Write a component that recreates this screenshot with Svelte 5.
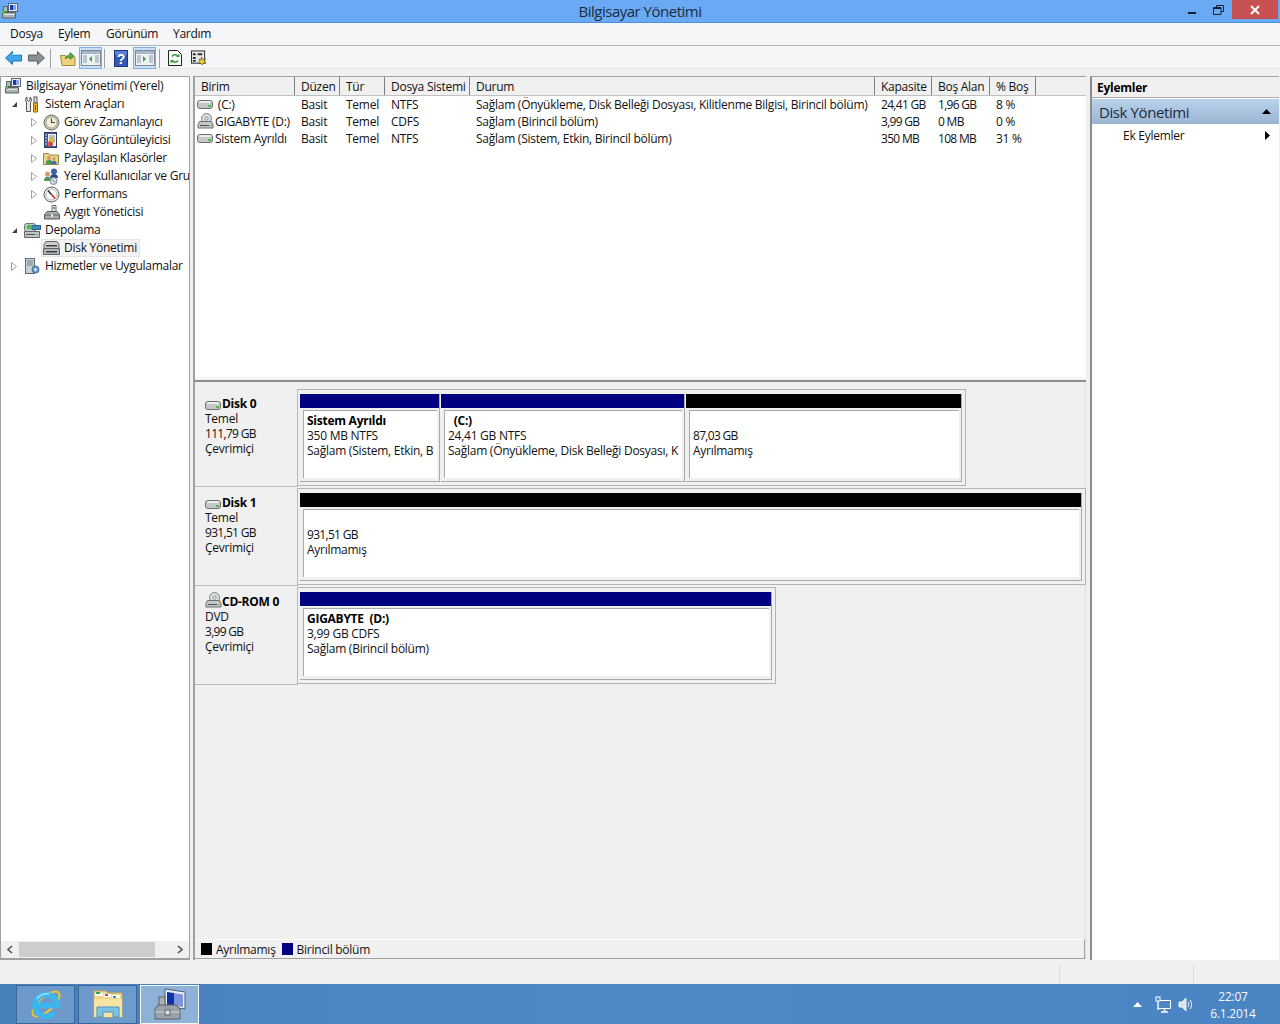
<script>
    // Tree on the left: depth, arrow state, icon, label
    const tree = [
        { depth: 0, arrow: "", icon: "comp", label: "Bilgisayar Yönetimi (Yerel)" },
        { depth: 1, arrow: "open", icon: "tools", label: "Sistem Araçları" },
        { depth: 2, arrow: "closed", icon: "clock", label: "Görev Zamanlayıcı" },
        { depth: 2, arrow: "closed", icon: "log", label: "Olay Görüntüleyicisi" },
        { depth: 2, arrow: "closed", icon: "share", label: "Paylaşılan Klasörler" },
        { depth: 2, arrow: "closed", icon: "users", label: "Yerel Kullanıcılar ve Gru" },
        { depth: 2, arrow: "closed", icon: "perf", label: "Performans" },
        { depth: 2, arrow: "", icon: "device", label: "Aygıt Yöneticisi" },
        { depth: 1, arrow: "open", icon: "storage", label: "Depolama" },
        { depth: 2, arrow: "", icon: "diskmgmt", label: "Disk Yönetimi", selected: true },
        { depth: 1, arrow: "closed", icon: "services", label: "Hizmetler ve Uygulamalar" }
    ];

    const columns = [
        { name: "Birim", width: 100 },
        { name: "Düzen", width: 45 },
        { name: "Tür", width: 45 },
        { name: "Dosya Sistemi", width: 85 },
        { name: "Durum", width: 405 },
        { name: "Kapasite", width: 57 },
        { name: "Boş Alan", width: 58 },
        { name: "% Boş", width: 46 }
    ];

    const volumes = [
        { icon: "hdd", cells: ["\u00a0(C:)", "Basit", "Temel", "NTFS", "Sağlam (Önyükleme, Disk Belleği Dosyası, Kilitlenme Bilgisi, Birincil bölüm)", "24,41 GB", "1,96 GB", "8 %"] },
        { icon: "cd", cells: ["GIGABYTE (D:)", "Basit", "Temel", "CDFS", "Sağlam (Birincil bölüm)", "3,99 GB", "0 MB", "0 %"] },
        { icon: "hdd", cells: ["Sistem Ayrıldı", "Basit", "Temel", "NTFS", "Sağlam (Sistem, Etkin, Birincil bölüm)", "350 MB", "108 MB", "31 %"] }
    ];

    const disks = [
        {
            icon: "hdd", name: "Disk 0", lines: ["Temel", "111,79 GB", "Çevrimiçi"], width: 668,
            parts: [
                { width: 140, color: "navy", title: "Sistem Ayrıldı", size: "350 MB NTFS", state: "Sağlam (Sistem, Etkin, B" },
                { width: 244, color: "navy", title: "\u00a0 (C:)", size: "24,41 GB NTFS", state: "Sağlam (Önyükleme, Disk Belleği Dosyası, K" },
                { width: 276, color: "black", title: "\u00a0", size: "87,03 GB", state: "Ayrılmamış" }
            ]
        },
        {
            icon: "hdd", name: "Disk 1", lines: ["Temel", "931,51 GB", "Çevrimiçi"], width: 788,
            parts: [{ width: 782, color: "black", title: "\u00a0", size: "931,51 GB", state: "Ayrılmamış" }]
        },
        {
            icon: "cd", name: "CD-ROM 0", lines: ["DVD", "3,99 GB", "Çevrimiçi"], width: 478,
            parts: [{ width: 472, color: "navy", title: "GIGABYTE\u00a0 (D:)", size: "3,99 GB CDFS", state: "Sağlam (Birincil bölüm)" }]
        }
    ];

    function isSize(text) {
        return /^[\d,]+ (GB|MB)$/.test(text);
    }
</script>

{#snippet hdd()}
    <svg width="17" height="11" viewBox="0 0 17 11">
        <rect x="0.5" y="1.5" width="15" height="8" rx="2.5" fill="#c4c8c8" stroke="#6b6f70" />
        <rect x="2" y="2" width="12" height="2" rx="1" fill="#eceeee" />
        <rect x="11" y="6" width="3" height="2" fill="#58b84a" />
    </svg>
{/snippet}

{#snippet cd()}
    <svg width="17" height="17" viewBox="0 0 17 17">
        <circle cx="9.5" cy="5.5" r="5" fill="#d6dde0" stroke="#7d8689" />
        <circle cx="9.5" cy="5.5" r="1.5" fill="#fff" stroke="#7d8689" />
        <path d="M2.500 8.500h12l1.500 3v3.500h-15v-3.500z" fill="#c4c8c8" stroke="#6b6f70" />
        <rect x="3" y="12" width="9" height="1" fill="#4d5153" />
        <rect x="13" y="12" width="2" height="1" fill="#58b84a" />
    </svg>
{/snippet}

{#snippet comp(size = 16)}
    <svg width={size} height={size} viewBox="0 0 16 16">
        <rect x="6.5" y="0.5" width="9" height="8" fill="#e8eef8" stroke="#59667a" />
        <path d="M8 2h6v5H8z" fill="#1438b4" />
        <path d="M11 2h3v5h-3z" fill="#8aa4e4" />
        <rect x="1.5" y="3.5" width="4" height="5" fill="#b4bcc0" stroke="#59636a" />
        <path d="M0.500 9.500h13v5.500h-13z" fill="#a9b1b6" stroke="#59636a" />
        <rect x="2" y="11" width="10" height="1" fill="#e4e8ea" />
        <rect x="0" y="8" width="3" height="3" fill="#58b84a" />
    </svg>
{/snippet}

{#snippet icon(name)}
    {#if name === "comp"}
        {@render comp()}
    {:else if name === "tools"}
        <svg width="16" height="17" viewBox="0 0 16 17">
            <path d="M3 1v3l1.500 1L6 4V1c2 1 2 4 .5 5v9.500h-4V6C1 5 1 2 3 1z" fill="#e6e8ea" stroke="#55595c" />
            <rect x="10" y="1" width="3" height="6" fill="#d8dadc" stroke="#55595c" />
            <path d="M9.500 7h4v9h-4z" fill="#f2b61c" stroke="#8a6408" />
            <rect x="11" y="9" width="1" height="5" fill="#7a5a08" />
        </svg>
    {:else if name === "clock"}
        <svg width="17" height="17" viewBox="0 0 17 17">
            <circle cx="8.5" cy="8.5" r="7.5" fill="#ccc6b2" stroke="#6c6c68" />
            <circle cx="8.5" cy="8.5" r="5.5" fill="#f4f0dc" stroke="#a8a494" />
            <path d="M8.500 4.500v4h3.500" fill="none" stroke="#4c4a3e" stroke-width="1.2" />
        </svg>
    {:else if name === "log"}
        <svg width="16" height="16" viewBox="0 0 16 16">
            <rect x="1.5" y="0.5" width="12" height="15" fill="#3f5a94" stroke="#2b3e68" />
            <rect x="5" y="2" width="8" height="12" fill="#f2f2ee" />
            <path d="M6 4h6M6 6h6M6 8h6" stroke="#8d94a4" />
            <path d="M8.500 5l3 5h-6z" fill="#f5d23a" stroke="#a88a10" stroke-width="0.6" />
            <circle cx="7.5" cy="12" r="2.5" fill="#d8473c" />
            <path d="M2 3h2M2 6h2M2 9h2M2 12h2" stroke="#d7deea" />
        </svg>
    {:else if name === "share"}
        <svg width="16" height="16" viewBox="0 0 16 16">
            <path d="M0.500 3.500h5l1 1.500h9v9.500h-15z" fill="#ecd48e" stroke="#9c8644" />
            <circle cx="6" cy="8" r="2" fill="#cc9a6e" />
            <path d="M3 14v-2.500c0-1 1-1.500 3-1.500s3 .5 3 1.500v2.500z" fill="#4a9a58" />
            <circle cx="11" cy="9" r="1.7" fill="#cc9a6e" />
            <path d="M8.500 14v-1.500c0-1 1-1.500 2.500-1.500s2.500 .5 2.500 1.500v1.500z" fill="#3e6cb0" />
        </svg>
    {:else if name === "users"}
        <svg width="17" height="17" viewBox="0 0 17 17">
            <circle cx="11" cy="3.5" r="3" fill="#3c5fa8" />
            <path d="M7 10c0-3 2-4 4-4s4 1 4 4z" fill="#2a4a90" />
            <circle cx="4.5" cy="6" r="2.5" fill="#d0a070" />
            <path d="M1 13c0-3 1.500-4.500 3.500-4.500S8 10 8 13z" fill="#4a9a50" />
            <circle cx="10.5" cy="13" r="3.5" fill="#d8dee4" stroke="#7b8893" />
            <path d="M8.500 11.500l4 3" stroke="#7b8893" />
        </svg>
    {:else if name === "perf"}
        <svg width="17" height="17" viewBox="0 0 17 17">
            <circle cx="8.5" cy="8.5" r="7.5" fill="#eef0f0" stroke="#5a5e60" />
            <circle cx="8.5" cy="8.5" r="5.5" fill="#fff" stroke="#b4b8ba" />
            <path d="M5 4.500l3.500 4" stroke="#26304c" stroke-width="1.6" />
            <path d="M8.500 8.500l3.500 4" stroke="#d2281e" stroke-width="1.6" />
        </svg>
    {:else if name === "device"}
        <svg width="17" height="16" viewBox="0 0 17 16">
            <path d="M9 1.500h4v6h-4z" fill="#e6e8e8" stroke="#6a6e70" />
            <rect x="10" y="3" width="2" height="2" fill="#58b84a" />
            <path d="M4 7.500h10l2.500 3v4.500h-15v-4.500z" fill="#a8adb0" stroke="#55595c" />
            <path d="M2 11h14" stroke="#5e6366" />
            <rect x="8" y="10" width="2" height="3" fill="#e0e2e2" />
        </svg>
    {:else if name === "storage"}
        <svg width="17" height="17" viewBox="0 0 17 17">
            <rect x="0.5" y="1.5" width="11" height="8" rx="2" fill="#c2d0d4" stroke="#6b7578" />
            <circle cx="5" cy="5" r="2.5" fill="#58b84a" />
            <rect x="8" y="3.5" width="8.5" height="4" fill="#3a8ec0" stroke="#2a6486" />
            <path d="M0.500 9.500h15v6h-15z" fill="#bfc4c6" stroke="#5f6568" />
            <rect x="2" y="12" width="9" height="1" fill="#4d5153" />
            <rect x="12" y="12" width="2" height="1" fill="#58b84a" />
        </svg>
    {:else if name === "diskmgmt"}
        <svg width="17" height="16" viewBox="0 0 17 16">
            <path d="M3 1.500h11l2 3v4h-15v-4z" fill="#c9cdce" stroke="#5c6062" />
            <rect x="3" y="5" width="11" height="1.5" fill="#3e4244" />
            <path d="M0.500 8.500h16v6h-16z" fill="#b1b6b8" stroke="#5c6062" />
            <rect x="3" y="11" width="11" height="1.5" fill="#3e4244" />
        </svg>
    {:else if name === "services"}
        <svg width="17" height="17" viewBox="0 0 17 17">
            <rect x="1.5" y="0.5" width="9" height="15" fill="#c8d0d8" stroke="#5e6a74" />
            <path d="M3 3h6M3 5h6M3 7h6" stroke="#6f7c88" />
            <circle cx="11.5" cy="11.5" r="3.5" fill="#6c9ed0" stroke="#3e6a96" />
            <circle cx="11.5" cy="11.5" r="1.2" fill="#eef4fa" />
        </svg>
    {/if}
{/snippet}

{#snippet volumeIcon(name)}
    {#if name === "hdd"}{@render hdd()}{:else}{@render cd()}{/if}
{/snippet}

<div class="screen">
    <header class="titlebar">
        <span class="titleIcon">{@render comp(16)}</span>
        <span class="title">Bilgisayar Yönetimi</span>
        <div class="winButtons">
            <span class="winBtn">
                <svg width="10" height="10" viewBox="0 0 10 10"><rect x="1" y="7" width="8" height="2" fill="#14202c" /></svg>
            </span>
            <span class="winBtn">
                <svg width="11" height="10" viewBox="0 0 11 10"><path d="M3.500 2.500v-2h7v6h-2M0.500 2.500h7.500v7h-7.500z" fill="none" stroke="#14202c" /><rect x="1" y="3" width="7" height="1" fill="#14202c" /></svg>
            </span>
            <span class="winBtn close">
                <svg width="10" height="10" viewBox="0 0 10 10"><path d="M1 1l8 8M9 1l-8 8" stroke="#fff" stroke-width="2" /></svg>
            </span>
        </div>
    </header>

    <nav class="menubar">
        <span class="menuWide">Dosya</span>
        <span class="menuWide">Eylem</span>
        <span class="menuView">Görünüm</span>
        <span>Yardım</span>
    </nav>

    <div class="toolbar">
        <svg width="17" height="14" viewBox="0 0 17 14"><path d="M7.500 0.500L0.500 7l7 6.500V10h9V4h-9z" fill="#3fa6ea" stroke="#1f6fb4" /><path d="M7 3.500H16" stroke="#9fdcfa" /></svg>
        <svg class="gapS" width="17" height="14" viewBox="0 0 17 14"><path d="M9.500 0.500l7 6.500-7 6.500V10h-9V4h9z" fill="#8b8f92" stroke="#5f6366" /></svg>
        <span class="sep sepA"></span>
        <svg class="gapM" width="16" height="17" viewBox="0 0 16 17"><path d="M0.500 5.500h5l1 1.500h8.500v8.500H2z" fill="#f0d078" stroke="#a88a3a" /><path d="M5 9c1-3 3-4 5-4V2.500l4 3.500-4 3.500V7c-2 0-4 1-5 2z" fill="#58b04a" stroke="#2e7a28" stroke-width="0.7" /></svg>
        <span class="toggle gapF">
            <svg width="20" height="16" viewBox="0 0 20 16"><rect x="0.5" y="0.5" width="19" height="15" fill="#eef2f6" stroke="#7b8794" /><rect x="1" y="1" width="18" height="3" fill="#a8b8c8" /><path d="M2 6h4M2 8h4M2 10h4M2 12h4M14 6h4M14 8h4M14 10h4M14 12h4" stroke="#8c98a4" /><path d="M11 6v6l-3-3z" fill="#3aa53a" /></svg>
        </span>
        <span class="sep sepB"></span>
        <svg class="gapH" width="14" height="17" viewBox="0 0 14 17"><rect x="0.5" y="0.5" width="13" height="16" fill="#3458b8" stroke="#1e3480" /><path d="M1 1h12v4H1z" fill="#5d80d4" /><text x="7" y="13.500" text-anchor="middle" font-family="Liberation Sans" font-size="14" font-weight="700" fill="#fff">?</text></svg>
        <span class="toggle gapT">
            <svg width="20" height="16" viewBox="0 0 20 16"><rect x="0.5" y="0.5" width="19" height="15" fill="#eef2f6" stroke="#7b8794" /><rect x="1" y="1" width="18" height="3" fill="#a8b8c8" /><path d="M2 6h4M2 8h4M2 10h4M2 12h4M14 6h4M14 8h4M14 10h4M14 12h4" stroke="#8c98a4" /><path d="M8 6v6l3-3z" fill="#3aa53a" /></svg>
        </span>
        <span class="sep sepC"></span>
        <svg class="gapR" width="14" height="16" viewBox="0 0 14 16"><path d="M0.500 0.500h9l4 4v11h-13z" fill="#fff" stroke="#222" /><path d="M4 6.500a3.500 3.500 0 0 1 6 0M10 10.500a3.500 3.500 0 0 1-6 0" fill="none" stroke="#2c9a30" stroke-width="1.5" /><path d="M8 7h3.500V3.500zM6 10H2.500v3.500z" fill="#2c9a30" /></svg>
        <svg class="gapE" width="16" height="16" viewBox="0 0 17 16"><rect x="0.5" y="0.5" width="14" height="13" fill="#e8e8e4" stroke="#222" /><path d="M2 3h3v2H2zM7 3h5v2H7zM2 7h3v2H2zM2 10h3v2H2z" fill="#333" /><path d="M11 7l1.500 2.500 3-.5-1.500 2.500 2 2-3 .2-1 1.800-1.500-2-2.500.2 1.500-2.500-1-2 2.500.3z" fill="#f0d020" stroke="#333" stroke-width="0.6" /></svg>
    </div>

    <main class="workarea">
        <aside class="tree">
            <div class="treeList">
                {#each tree as node}
                    <div class="treeRow depth{node.depth}">
                        <span class="arrow">
                            {#if node.arrow === "open"}
                                <svg width="7" height="7" viewBox="0 0 7 7"><path d="M6 1v5H1z" fill="#404040" /></svg>
                            {:else if node.arrow === "closed"}
                                <svg width="6" height="9" viewBox="0 0 6 9"><path d="M0.500 0.500l5 4-5 4z" fill="#fff" stroke="#a0a0a0" /></svg>
                            {/if}
                        </span>
                        <span class="treeItem" class:selected={node.selected}>
                            <span class="treeIcon">{@render icon(node.icon)}</span>
                            <span class="treeLabel">{node.label}</span>
                        </span>
                    </div>
                {/each}
            </div>
            <div class="hscroll">
                <svg width="8" height="9" viewBox="0 0 8 9"><path d="M6 1L2 4.500 6 8" fill="none" stroke="#505050" stroke-width="1.600" /></svg>
                <span class="thumb"></span>
                <svg width="8" height="9" viewBox="0 0 8 9"><path d="M2 1l4 3.500L2 8" fill="none" stroke="#505050" stroke-width="1.600" /></svg>
            </div>
        </aside>

        <section class="center">
            <div class="listPane">
                <div class="listHead">
                    {#each columns as col}
                        <span class="headCell" style="width:{col.width}px">{col.name}</span>
                    {/each}
                </div>
                {#each volumes as vol}
                    <div class="listRow">
                        {#each vol.cells as cell, i}
                            <span class="cell" class:first={i === 0} class:size={isSize(cell)} style="width:{columns[i].width}px">
                                {#if i === 0}<span class="volIcon">{@render volumeIcon(vol.icon)}</span>{/if}{cell}
                            </span>
                        {/each}
                    </div>
                {/each}
            </div>
            <div class="splitter"></div>
            <div class="diskPane">
                <div class="diskList">
                    {#each disks as disk}
                        <div class="diskRow">
                            <div class="diskInfo">
                                <div class="diskName"><span class="diskIcon">{@render volumeIcon(disk.icon)}</span>{disk.name}</div>
                                {#each disk.lines as line}
                                    <div class:size={isSize(line)}>{line}</div>
                                {/each}
                            </div>
                            <div class="partitions" style="width:{disk.width}px">
                                {#each disk.parts as part}
                                    <div class="partition" style="width:{part.width}px">
                                        <div class="bar {part.color}"></div>
                                        <div class="partBody">
                                            <div class="partText">
                                                <b>{part.title}</b>
                                                <div class:size={isSize(part.size)}>{part.size}</div>
                                                <div>{part.state}</div>
                                            </div>
                                        </div>
                                    </div>
                                {/each}
                            </div>
                        </div>
                    {/each}
                </div>
                <div class="legend">
                    <span class="swatch black"></span><span class="legendText">Ayrılmamış</span>
                    <span class="swatch navy"></span><span>Birincil bölüm</span>
                </div>
            </div>
        </section>

        <aside class="actions">
            <div class="actionsHead">Eylemler</div>
            <div class="actionsGroup">
                <span>Disk Yönetimi</span>
                <svg width="9" height="5" viewBox="0 0 9 5"><path d="M4.500 0L9 5H0z" fill="#000" /></svg>
            </div>
            <div class="actionsItem">
                <span>Ek Eylemler</span>
                <svg width="5" height="9" viewBox="0 0 5 9"><path d="M0 0l5 4.500L0 9z" fill="#000" /></svg>
            </div>
        </aside>
    </main>

    <div class="statusbar">
        <span class="statusMain"></span>
        <span class="statusMid"></span>
        <span class="statusEnd"></span>
    </div>

    <footer class="taskbar">
        <div class="taskBtn">
            <svg width="32" height="34" viewBox="0 0 32 34">
                <ellipse cx="16" cy="17" rx="17" ry="7" transform="rotate(-42 16 17)" fill="none" stroke="#f2c230" stroke-width="2" />
                <path d="M6 18.500H27A11 11 0 1 0 24 26" fill="none" stroke="#3cb6ee" stroke-width="5.500" />
                <path d="M7 12c2-4 7-6 12-5" fill="none" stroke="#a8e4fa" stroke-width="1.500" />
            </svg>
        </div>
        <div class="taskBtn">
            <svg width="32" height="30" viewBox="0 0 32 30">
                <path d="M2 2h12l2 2h14v24H2z" fill="#f0d888" stroke="#c8a858" />
                <path d="M3 4h8v3H3z" fill="#fff" /><rect x="4" y="3" width="4" height="2" fill="#2aa84a" />
                <path d="M12 5h7v3h-7z" fill="#fff" /><rect x="13" y="5" width="3" height="2" fill="#d84030" />
                <path d="M20 6h8v3h-8z" fill="#fff" /><rect x="21" y="7" width="3" height="2" fill="#2a90e0" />
                <path d="M2 10h28v18H2z" fill="#f6e4a4" />
                <path d="M5 18h22v10h-6v-5H11v5H5z" fill="#7cc4e4" stroke="#4a94bc" />
            </svg>
        </div>
        <div class="taskBtn active">
            <svg width="32" height="32" viewBox="0 0 32 32">
                <path d="M11 1l20 3v17l-20-3z" fill="#e8eef8" stroke="#52606e" />
                <path d="M13 4l7 1v13l-7-1z" fill="#1030a8" />
                <path d="M20 5l9 1.500v12.500l-9-1z" fill="#7c94dc" />
                <rect x="5" y="9" width="6" height="9" fill="#aab2b6" stroke="#5a6266" />
                <path d="M4 17h18l4 4v10H1V21z" fill="#98a2a8" stroke="#5a6266" />
                <path d="M1 24h25" stroke="#d0d6d8" />
                <rect x="11" y="22" width="5" height="5" fill="#dce2e4" stroke="#5a6266" />
            </svg>
        </div>
        <div class="tray">
            <svg width="9" height="5" viewBox="0 0 9 5"><path d="M4.500 0L9 5H0z" fill="#fff" /></svg>
            <svg class="net" width="16" height="17" viewBox="0 0 16 17"><path d="M3.500 4.500H15.500v8H3.500" fill="none" stroke="#fff" /><path d="M9.500 12.500v2.500M6 16h7" stroke="#fff" stroke-width="1.400" /><rect x="1" y="1" width="4" height="4" fill="#4a86c4" stroke="#fff" /><path d="M3 5v9" stroke="#fff" stroke-width="1.400" /></svg>
            <svg class="vol" width="16" height="15" viewBox="0 0 16 15"><path d="M1 5h3l4-4v13l-4-4H1z" fill="#d8e4f2" stroke="#fff" stroke-width="0.800" /><path d="M10 5c1 1.500 1 3.500 0 5M12 3c2 2.500 2 6.500 0 9" fill="none" stroke="#fff" /></svg>
            <div class="clock"><div>22:07</div><div>6.1.2014</div></div>
        </div>
    </footer>
</div>

<style>
    :global(body) {
        margin: 0;
        background: #f0f0f0;
    }

    .screen {
        width: 1280px;
        height: 1024px;
        display: flex;
        flex-direction: column;
        overflow: hidden;
        font-family: "Open Sans", "Liberation Sans", sans-serif;
        font-size: 12px;
        letter-spacing: -0.26px;
        color: #111;
    }

    .size {
        letter-spacing: -0.7px;
    }

    .titlebar {
        height: 22px;
        flex: none;
        display: flex;
        align-items: center;
        position: relative;
        background: #6aaaf4;
        border-bottom: 1px solid #4d8fd8;
    }

    .titleIcon {
        display: flex;
        margin-left: 2px;
    }

    .title {
        position: absolute;
        left: 0;
        right: 0;
        text-align: center;
        font-size: 15px;
        letter-spacing: -0.5px;
        color: #1b2b3c;
    }

    .winButtons {
        margin-left: auto;
        display: flex;
        align-self: flex-start;
        margin-right: 2px;
    }

    .winBtn {
        width: 27px;
        height: 19px;
        display: flex;
        align-items: center;
        justify-content: center;
    }

    .close {
        width: 46px;
        background: #c75050;
    }

    .menubar {
        height: 22px;
        flex: none;
        display: flex;
        align-items: center;
        padding-left: 10px;
        padding-bottom: 1px;
        box-sizing: content-box;
        height: 21px;
        background: #f5f6f7;
        border-bottom: 1px solid #b5b5b5;
    }

    .menuWide { width: 48px; }
    .menuView { width: 67px; }

    .toolbar {
        height: 20px;
        padding-top: 2px;
        flex: none;
        display: flex;
        align-items: center;
        padding-left: 5px;
        background: #f5f6f7;
        border-bottom: 1px solid #e8e8e8;
    }

    .gapS { margin-left: 6px; }
    .gapM { margin-left: 9px; }
    .gapF { margin-left: 3px; }
    .gapH { margin-left: 9px; }
    .gapT { margin-left: 5px; }
    .gapR { margin-left: 8px; }
    .gapE { margin-left: 9px; }

    .sep {
        width: 1px;
        height: 19px;
        background: #a0a0a0;
    }

    .sepA { margin-left: 5px; }
    .sepB { margin-left: 2px; }
    .sepC { margin-left: 3px; }

    .toggle {
        width: 21px;
        height: 20px;
        flex: none;
        display: flex;
        align-items: center;
        justify-content: center;
        background: #c9e0f7;
        border: 1px solid #7eb0e4;
    }

    .workarea {
        flex: 1;
        min-height: 0;
        display: flex;
        padding: 7px 0 2px 0;
        gap: 3px;
    }

    .tree {
        width: 188px;
        display: flex;
        flex-direction: column;
        background: #fff;
        border: 1px solid #a0a0a0;
        border-bottom-width: 2px;
    }

    .treeList {
        flex: 1;
        overflow: hidden;
    }

    .treeRow {
        height: 18px;
        display: flex;
        align-items: center;
        white-space: nowrap;
    }

    .depth0 { padding-left: 4px; }
    .depth1 { padding-left: 10px; }
    .depth2 { padding-left: 30px; }

    .arrow {
        width: 13px;
        display: flex;
        flex: none;
    }

    .depth2 .arrow { width: 12px; }
    .depth0 .arrow { width: 0; }

    .treeItem {
        display: flex;
        align-items: center;
        height: 18px;
    }

    .treeIcon {
        width: 17px;
        height: 17px;
        flex: none;
        display: flex;
        align-items: center;
        margin-right: 3px;
    }

    .treeLabel {
        padding: 0 3px 1px 1px;
        line-height: 15px;
    }

    .selected {
        margin-left: -2px;
        padding-left: 2px;
        background: #f3f3f3;
        box-shadow: inset 0 0 0 1px #e4e4e4;
    }

    .hscroll {
        height: 17px;
        flex: none;
        display: flex;
        align-items: center;
        padding: 0 5px;
        background: #f0f0f0;
    }

    .thumb {
        width: 136px;
        height: 15px;
        margin: 0 auto 0 5px;
        background: #cdcdcd;
    }

    .center {
        width: 891px;
        display: flex;
        flex-direction: column;
        border-left: 2px solid #a0a0a0;
        border-top: 1px solid #a0a0a0;
    }

    .listPane {
        height: 300px;
        flex: none;
        background: #fff;
        overflow: hidden;
    }

    .listHead {
        height: 18px;
        display: flex;
        background: #f0f0f0;
        border-bottom: 1px solid #c0c0c0;
    }

    .headCell {
        flex: none;
        box-sizing: border-box;
        padding: 1px 0 0 6px;
        border-right: 1px solid #808080;
        white-space: nowrap;
    }

    .listRow {
        height: 17px;
        display: flex;
        align-items: center;
    }

    .cell {
        flex: none;
        box-sizing: border-box;
        padding-left: 6px;
        white-space: pre;
        overflow: hidden;
    }

    .first {
        padding-left: 2px;
        display: flex;
        align-items: center;
    }

    .volIcon {
        display: flex;
        width: 18px;
        flex: none;
    }

    .splitter {
        height: 5px;
        flex: none;
        background: #f4f4f4;
        border-bottom: 2px solid #8c8c8c;
        box-sizing: border-box;
    }

    .diskPane {
        flex: 1;
        min-height: 0;
        display: flex;
        flex-direction: column;
        background: #f0f0f0;
        border-right: 1px solid #e0e0e0;
    }

    .diskList {
        flex: 1;
        padding-top: 7px;
    }

    .diskRow {
        height: 99px;
        display: flex;
        align-items: flex-start;
    }

    .diskInfo {
        width: 103px;
        height: 98px;
        flex: none;
        box-sizing: border-box;
        padding: 7px 0 0 10px;
        line-height: 15px;
        border-right: 1px solid #b8b8b8;
        border-bottom: 1px solid #b8b8b8;
    }

    .diskName {
        display: flex;
        align-items: center;
        font-weight: 700;
        color: #000;
    }

    .diskIcon {
        width: 17px;
        height: 15px;
        display: flex;
        align-items: flex-end;
    }

    .partitions {
        height: 97px;
        box-sizing: border-box;
        display: flex;
        gap: 1px;
        padding: 4px 3px 3px 2px;
        border: 1px solid #b4b4b4;
        border-left: 0;
    }

    .partition {
        flex: none;
        display: flex;
        flex-direction: column;
        box-sizing: border-box;
        border-right: 1px solid #a9a9a9;
        border-bottom: 1px solid #a9a9a9;
    }

    .bar {
        height: 14px;
        flex: none;
    }

    .navy { background: #000080; }
    .black { background: #000; }

    .partBody {
        flex: 1;
        margin: 2px 2px 3px 3px;
        background: #fff;
        border-top: 1px solid #a9a9a9;
        border-left: 1px solid #a9a9a9;
        overflow: hidden;
    }

    .partText {
        padding: 2px 0 0 3px;
        line-height: 15px;
        white-space: nowrap;
    }

    .partText b {
        color: #000;
    }

    .legend {
        height: 20px;
        flex: none;
        display: flex;
        align-items: center;
        padding-left: 6px;
        margin-bottom: 1px;
        border-top: 1px solid #fff;
        border-bottom: 1px solid #a0a0a0;
        border-right: 1px solid #a0a0a0;
        box-sizing: border-box;
    }

    .swatch {
        width: 11px;
        height: 12px;
        margin-right: 4px;
    }

    .legendText {
        margin-right: 6px;
    }

    .actions {
        width: 187px;
        margin-left: 1px;
        background: #fff;
        border-left: 2px solid #8c8c8c;
        border-top: 1px solid #a0a0a0;
    }

    .actionsHead {
        height: 21px;
        box-sizing: border-box;
        padding: 2px 0 0 5px;
        font-weight: 700;
        background: #f0f0f0;
        border-bottom: 1px solid #a9a9a9;
        color: #000;
    }

    .actionsGroup {
        height: 25px;
        margin-top: 1px;
        display: flex;
        align-items: center;
        justify-content: space-between;
        padding: 0 8px 0 7px;
        font-size: 15px;
        letter-spacing: -0.4px;
        color: #1a2a40;
        background: linear-gradient(#bad2ea, #9ab5d4);
    }

    .actionsItem {
        height: 23px;
        display: flex;
        align-items: center;
        justify-content: space-between;
        padding: 0 9px 0 31px;
    }

    .statusbar {
        height: 22px;
        flex: none;
        display: flex;
        background: #f0f0f0;
    }

    .statusMain { width: 1059px; }

    .statusMid {
        width: 133px;
        margin: 2px 0 0;
        border-left: 1px solid #dcdcdc;
    }

    .statusEnd {
        flex: 1;
        margin: 2px 0 0;
        border-left: 1px solid #dcdcdc;
    }

    .taskbar {
        height: 40px;
        flex: none;
        display: flex;
        align-items: center;
        gap: 3px;
        padding-left: 16px;
        background: linear-gradient(90deg, #4880bc, #4f8ac8 50%, #4a84c2);
    }

    .taskBtn {
        width: 57px;
        height: 37px;
        display: flex;
        align-items: center;
        justify-content: center;
        background: rgba(255, 255, 255, 0.2);
        border: 1px solid #36689c;
        overflow: hidden;
    }

    .active {
        background: rgba(255, 255, 255, 0.38);
        border-color: #f4f8fc;
    }

    .tray {
        margin-left: auto;
        display: flex;
        align-items: center;
        color: #fff;
    }

    .net { margin-left: 13px; }
    .vol { margin-left: 7px; }

    .clock {
        width: 66px;
        margin-left: 6px;
        margin-right: 14px;
        padding-top: 2px;
        text-align: center;
        line-height: 17px;
        color: #f4f8fc;
    }
</style>
